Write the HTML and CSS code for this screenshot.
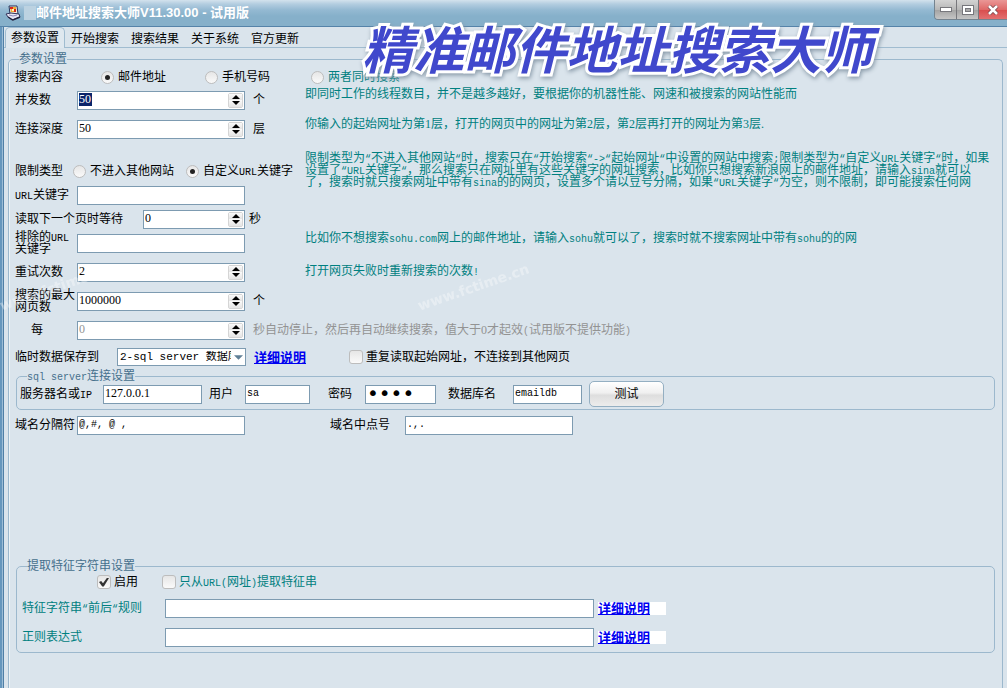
FILE: index.html
```html
<!DOCTYPE html>
<html lang="zh-CN">
<head>
<meta charset="utf-8">
<title>邮件地址搜索大师V11.30.00 - 试用版</title>
<link rel="stylesheet" href="styles.css">
</head>
<body>
<svg class="defs" width="0" height="0" aria-hidden="true">
  <symbol id="up" viewBox="0 0 8 4"><path d="M0 4h8L4 0z"/></symbol>
  <symbol id="down" viewBox="0 0 8 4"><path d="M0 0h8L4 4z"/></symbol>
</svg>
<header class="titlebar">
  <svg class="app-icon" width="16" height="16" viewBox="0 0 16 16" aria-hidden="true">
    <path d="M4 1h8l1 8H5z" fill="#f4e9d8" stroke="#27335c"/>
    <path d="M5 2h6v5H6z" fill="#f0b030"/><path d="M5 2h3v2H5zM9 4h2v3H9z" fill="#d8261c"/><path d="M7 4h2v2H7z" fill="#fff3c0"/>
    <path d="M1 9l5-1 8 1 1 3-8 3-4-3z" fill="#e8e6f4" stroke="#34345c"/>
    <path d="M3 12l5 3 7-3" fill="none" stroke="#23233f" stroke-width="1.4"/><path d="M4 10l4 1 4-1" fill="none" stroke="#8a86b8"/>
  </svg>
  <span class="patch"></span>
  <h1 class="title">邮件地址搜索大师V11.30.00 - 试用版</h1>
  <div class="window-buttons">
    <button type="button" aria-label="最小化"><svg width="12" height="6" viewBox="0 0 12 6"><rect x=".5" y=".5" width="11" height="4" fill="#fff" stroke="#77777c"/></svg></button>
    <button type="button" aria-label="最大化"><svg width="12" height="10" viewBox="0 0 12 10"><rect x=".5" y=".5" width="11" height="9" fill="#fff" stroke="#77777c"/><rect x="3.5" y="3.5" width="5" height="3" fill="#aaa" stroke="#77777c"/></svg></button>
    <button type="button" class="close" aria-label="关闭"><svg width="12" height="10" viewBox="0 0 12 10"><path d="M2 1l8 8M10 1L2 9" stroke="#6d3b40" stroke-width="4"/><path d="M2 1l8 8M10 1L2 9" stroke="#fff" stroke-width="2.6"/></svg></button>
  </div>
</header>
<main class="frame">
  <nav class="tabs">
    <button type="button" class="tab active">参数设置</button>
    <button type="button" class="tab">开始搜索</button>
    <button type="button" class="tab">搜索结果</button>
    <button type="button" class="tab">关于系统</button>
    <button type="button" class="tab">官方更新</button>
  </nav>
  <form class="panel">
    <fieldset class="group outer">
      <legend>参数设置</legend>
      <div class="columns">
        <div class="left">
          <div class="row">
            <span class="cap wide">搜索内容</span>
            <label class="opt first"><input type="radio" name="kind" checked>邮件地址</label>
            <label class="opt"><input type="radio" name="kind">手机号码</label>
          </div>
          <div class="row">
            <label class="cap" for="threads">并发数</label>
            <span class="spin"><input id="threads" class="picked" value="50"><span class="arrows"><button type="button" aria-label="增加"><svg><use href="#up"/></svg></button><button type="button" aria-label="减少"><svg><use href="#down"/></svg></button></span></span>
            <span class="unit">个</span>
          </div>
          <div class="row gap">
            <label class="cap" for="depth">连接深度</label>
            <span class="spin"><input id="depth" value="50"><span class="arrows"><button type="button" aria-label="增加"><svg><use href="#up"/></svg></button><button type="button" aria-label="减少"><svg><use href="#down"/></svg></button></span></span>
            <span class="unit">层</span>
          </div>
          <div class="row gap-large">
            <span class="cap">限制类型</span>
            <label class="opt limit"><input type="radio" name="limit">不进入其他网站</label>
            <label class="opt"><input type="radio" name="limit" checked><span>自定义<span class="m">URL</span>关键字</span></label>
          </div>
          <div class="row">
            <label class="cap" for="url"><span class="m">URL</span>关键字</label>
            <input class="box field" id="url">
          </div>
          <div class="row">
            <label class="cap wait" for="wait">读取下一个页时等待</label>
            <span class="spin short"><input id="wait" value="0"><span class="arrows"><button type="button" aria-label="增加"><svg><use href="#up"/></svg></button><button type="button" aria-label="减少"><svg><use href="#down"/></svg></button></span></span>
            <span class="unit near">秒</span>
          </div>
          <div class="row">
            <label class="cap" for="exclude">排除的<span class="m">URL</span><br>关键字</label>
            <input class="box field" id="exclude">
          </div>
          <div class="row gap">
            <label class="cap" for="retry">重试次数</label>
            <span class="spin"><input id="retry" value="2"><span class="arrows"><button type="button" aria-label="增加"><svg><use href="#up"/></svg></button><button type="button" aria-label="减少"><svg><use href="#down"/></svg></button></span></span>
          </div>
        </div>
        <div class="hints">
          <label class="opt"><input type="radio" name="kind">两者同时搜索</label>
          <p>即同时工作的线程数目，并不是越多越好，要根据你的机器性能、网速和被搜索的网站性能而</p>
          <p class="hint-depth">你输入的起始网址为第1层，打开的网页中的网址为第2层，第2层再打开的网址为第3层.</p>
          <p class="hint-limit">限制类型为<span class="m">“</span>不进入其他网站<span class="m">“</span>时，搜索只在<span class="m">“</span>开始搜索<span class="m">“-&gt;“</span>起始网址<span class="m">“</span>中设置的网站中搜索<span class="m">;</span>限制类型为<span class="m">“</span>自定义<span class="m">URL</span>关键字<span class="m">“</span>时，如果<br>设置了<span class="m">“URL</span>关键字<span class="m">“</span>，那么搜索只在网址里有这些关键字的网址搜索，比如你只想搜索新浪网上的邮件地址，请输入<span class="m">sina</span>就可以<br>了，搜索时就只搜索网址中带有<span class="m">sina</span>的的网页，设置多个请以豆号分隔，如果<span class="m">“URL</span>关键字<span class="m">“</span>为空，则不限制，即可能搜索任何网</p>
          <p class="hint-exclude">比如你不想搜索<span class="m">sohu.com</span>网上的邮件地址，请输入<span class="m">sohu</span>就可以了，搜索时就不搜索网址中带有<span class="m">sohu</span>的的网</p>
          <p class="hint-retry">打开网页失败时重新搜索的次数<span class="m">!</span></p>
        </div>
      </div>
      <div class="row gap">
        <label class="cap" for="pages">搜索的最大<br>网页数</label>
        <span class="spin"><input id="pages" value="1000000"><span class="arrows"><button type="button" aria-label="增加"><svg><use href="#up"/></svg></button><button type="button" aria-label="减少"><svg><use href="#down"/></svg></button></span></span>
        <span class="unit">个</span>
      </div>
      <div class="row gap">
        <label class="cap every" for="every">每</label>
        <span class="spin"><input id="every" value="0" disabled><span class="arrows"><button type="button" aria-label="增加"><svg><use href="#up"/></svg></button><button type="button" aria-label="减少"><svg><use href="#down"/></svg></button></span></span>
        <span class="unit muted">秒自动停止，然后再自动继续搜索，值大于0才起效<span class="m">(</span>试用版不提供功能<span class="m">)</span></span>
      </div>
      <div class="row gap-small">
        <label class="cap store" for="store">临时数据保存到</label>
        <span class="select"><select id="store"><option>2-sql server 数据库</option></select><svg class="caret"><use href="#down"/></svg></span>
        <a class="more" href="#detail">详细说明</a>
        <label class="opt repeat"><input type="checkbox">重复读取起始网址，不连接到其他网页</label>
      </div>
      <fieldset class="group inner">
        <legend><span class="m">sql server</span>连接设置</legend>
        <div class="row server">
          <label class="host" for="host">服务器名或<span class="m">IP</span></label><input class="box w-host" id="host" value="127.0.0.1">
          <label class="user" for="user">用户</label><input class="box w-user mono" id="user" value="sa">
          <label class="pass" for="pass">密码</label><input class="box w-pass" id="pass" type="password" value="1234">
          <label class="db" for="db">数据库名</label><input class="box w-db mono" id="db" value="emaildb">
          <button type="button" class="test">测试</button>
        </div>
      </fieldset>
      <div class="row gap-small">
        <label class="cap" for="sep">域名分隔符</label>
        <input class="box field mono" id="sep" value="@,#, @ ,">
        <label class="cap dot" for="dot">域名中点号</label>
        <input class="box field mono" id="dot" value=".,.">
      </div>
      <fieldset class="group inner feature">
        <legend>提取特征字符串设置</legend>
        <div class="row checks">
          <label class="opt"><input type="checkbox" checked>启用</label>
          <label class="opt teal"><input type="checkbox"><span>只从<span class="m">URL(</span>网址<span class="m">)</span>提取特征串</span></label>
        </div>
        <div class="row rule">
          <label class="teal" for="rule">特征字符串<span class="m">“</span>前后<span class="m">“</span>规则</label><input class="box long" id="rule">
          <a class="more white" href="#rule-detail">详细说明</a>
        </div>
        <div class="row rule gap">
          <label class="teal" for="regex">正则表达式</label><input class="box long" id="regex">
          <a class="more white" href="#regex-detail">详细说明</a>
        </div>
      </fieldset>
    </fieldset>
  </form>
</main>
<div class="banner">精准邮件地址搜索大师</div>
<div class="watermark mark-left">www.fctime.cn</div>
<div class="watermark mark-mid">www.fctime.cn</div>
</body>
</html>
```

FILE: styles.css
```css
* { box-sizing: border-box; }
body {
  margin: 0;
  min-height: 100vh;
  display: flex;
  flex-direction: column;
  position: relative;
  overflow: hidden;
  background: #dae4ec;
  color: #000;
  font: 12px/12px "Liberation Serif", "Noto Sans CJK SC", sans-serif;
}
button, input, select { font: inherit; color: inherit; margin: 0; }
p { margin: 0; }
.defs { position: absolute; }
.m, .mono { font-family: "Liberation Mono", "Noto Sans CJK SC", monospace; font-size: 10px; }
.m { line-height: 0; }

.titlebar {
  display: flex;
  align-items: center;
  height: 27px;
  padding-left: 5px;
  background: linear-gradient(#d3e2ed 0, #b3cde0 4px, #94b9d2 10px, #86b0ca 16px, #86b0ca 100%);
  border-bottom: 1px solid #5583a9;
}
.patch { width: 12px; height: 14px; margin: 0 0 0 3px; background: #bcd2e1; }
.title {
  margin: 0;
  flex: 1;
  color: #fff;
  font: bold 13px/16px "Liberation Sans", "Noto Sans CJK SC", sans-serif;
}
.window-buttons { display: flex; align-self: flex-start; border: 1px solid #74838f; border-width: 0 0 1px 1px; border-radius: 0 0 0 4px; overflow: hidden; }
.window-buttons button {
  display: grid;
  place-items: center;
  width: 22px;
  height: 19px;
  padding: 0;
  border: 0;
  border-right: 1px solid #77777c;
  background: linear-gradient(#d3d3d3, #b7b7b7 50%, #a2a2a2 51%, #c5c5c5);
}
.window-buttons .close { width: 28px; border: 0; background: linear-gradient(#ea9796, #df6968 50%, #d94c4c 51%, #e27070); }

.frame { flex: 1; display: flex; flex-direction: column; border-left: 2px solid #6797bd; box-shadow: inset 1px 0 #9dbdd6, inset 2px 0 #4f7fa6; padding-left: 2px; }
.tabs { display: flex; height: 21px; padding-left: 1px; border-bottom: 1px solid #a0bcd0; }
.tab { width: 60px; padding: 3px 0 0; border: 0; background: none; text-align: center; }
.tab.active { height: 21px; padding: 0; background: #dfe8ef; border: 1px solid #a0bcd0; border-bottom: 0; border-radius: 5px 5px 0 0; }

.panel { flex: 1; display: flex; padding: 4px 4px 0; }
.group { margin: 0; min-width: 0; border: 1px solid #9cb8cd; border-radius: 5px; padding: 0; box-shadow: inset 1px 0 #edf3f7; }
.group legend { padding: 0; line-height: 14px; color: #46708c; }
.outer { flex: 1; border-bottom: 0; border-radius: 5px 5px 0 0; }
.outer > legend { margin-left: 10px; }
.inner { margin: 0 7px; box-shadow: none; }
.inner > legend { margin-left: 10px; }
.columns { display: flex; }
.left { width: 296px; flex: none; }
.hints { flex: 1; color: #008080; white-space: nowrap; }
.hints .opt { height: 22px; margin-left: 6px; }
.hint-depth { margin-top: 18px; }
.hint-limit { margin-top: 22px; }
.hint-exclude { margin-top: 44px; }
.hint-retry { margin-top: 21px; }

.row { display: flex; align-items: center; height: 24px; white-space: nowrap; }
.row:first-child { height: 22px; }
.gap { margin-top: 5px; }
.gap-small { margin-top: 3px; }
.gap-large { margin-top: 18px; }
.cap { width: 68px; flex: none; padding-left: 6px; }
.wide { width: 92px; }
.wait { width: 134px; }
.every { padding-left: 22px; }
.store { width: 108px; }
.dot { width: 166px; margin-left: -6px; padding-left: 91px; }
.unit { margin-left: 8px; }
.near { margin-left: 4px; }
.muted, input:disabled { color: #939393; }
.teal { color: #008080; }

.box { height: 19px; padding: 0 1px 2px; border: 1px solid #7d9bb1; border-radius: 0; background: #fff; outline: 0; }
.field { width: 168px; flex: none; }
.spin { display: flex; width: 168px; flex: none; height: 19px; border: 1px solid #7d9bb1; background: #fff; }
.short { width: 102px; }
.spin input { flex: 1; min-width: 0; padding: 0 1px 2px; border: 0; background: none; outline: 0; }
.spin .picked { color: #fff; background: linear-gradient(#0a246a, #0a246a) 1px 1px / 13px 13px no-repeat; }
.arrows { display: flex; flex-direction: column; width: 15px; margin: 1px; border: 1px solid #d5d5d5; border-radius: 2px; background: #eee; }
.arrows button { display: grid; place-items: center; flex: 1; min-height: 0; padding: 0; border: 0; background: linear-gradient(#fafafa, #e4e4e4); }
.arrows svg { width: 8px; height: 4px; }

.opt { display: flex; align-items: center; }
.first { width: 104px; }
.limit { width: 113px; margin-left: -4px; }
input[type="radio"], input[type="checkbox"] {
  appearance: none;
  display: grid;
  place-items: center;
  width: 13px;
  height: 13px;
  flex: none;
  margin-right: 4px;
  border: 1px solid #bdbdbd;
  border-radius: 50%;
  background: linear-gradient(#e6e6e6, #fafafa);
}
input[type="checkbox"] { width: 14px; height: 14px; border-radius: 3px; margin-right: 3px; }
input[type="radio"]:checked::before { content: ""; width: 5px; height: 5px; border-radius: 50%; background: #222; }
input[type="checkbox"]:checked::before { content: ""; width: 10px; height: 9px; background: #333; clip-path: polygon(0 50%, 22% 38%, 40% 65%, 82% 0, 100% 6%, 48% 100%, 32% 100%); }

.select { position: relative; width: 129px; height: 18px; flex: none; border: 1px solid #7d9bb1; background: #fff; }
.select select { appearance: none; width: 113px; height: 16px; padding: 0 0 0 2px; border: 0; background: none; font-family: "Liberation Mono", "Noto Sans CJK SC", monospace; font-size: 11px; }
.caret { position: absolute; right: 2px; top: 6px; width: 9px; height: 5px; fill: #5f7f96; }
.more { margin-left: 8px; font-size: 13px; line-height: 13px; font-weight: bold; color: #0000f0; }
.white { width: 68px; margin-left: 4px; background: #fff; }
.repeat { margin-left: 43px; }

.inner .server { height: 26px; margin: -2px 0 2px; }
.host { width: 86px; padding-left: 3px; }
.user { width: 43px; padding-left: 7px; }
.pass { width: 55px; padding-left: 18px; }
.db { width: 77px; padding-left: 12px; }
.w-host { width: 99px; }
.w-user { width: 65px; }
.w-pass { width: 71px; font-family: "DejaVu Sans", sans-serif; font-size: 20px; }
.w-db { width: 69px; }
.test { width: 75px; height: 26px; margin-left: 7px; padding: 0; border: 1px solid #94afc2; border-radius: 5px; background: linear-gradient(#fff, #f0f0f0 45%, #dedede 55%, #ececec); }

.feature { margin-top: 122px; padding-bottom: 3px; }
.feature .checks { height: 24px; margin: -3px 0 2px; padding-left: 80px; gap: 24px; }
.rule label { width: 148px; flex: none; padding-left: 5px; }
.long { width: 429px; }

.banner {
  position: absolute;
  left: 362px;
  top: 17px;
  color: #4048cc;
  font: italic bold 51px/60px "Noto Sans CJK SC", sans-serif;
  white-space: nowrap;
  -webkit-text-stroke: 6px #fff;
  paint-order: stroke fill;
  filter: drop-shadow(1px 2px 2px #8899a8);
}
.watermark { position: absolute; color: #fff; opacity: .35; font: bold 14px/20px "DejaVu Sans", sans-serif; transform: rotate(-19deg); }
.mark-mid { left: 415px; top: 277px; }
.mark-left { left: -3px; top: 277px; }
```
